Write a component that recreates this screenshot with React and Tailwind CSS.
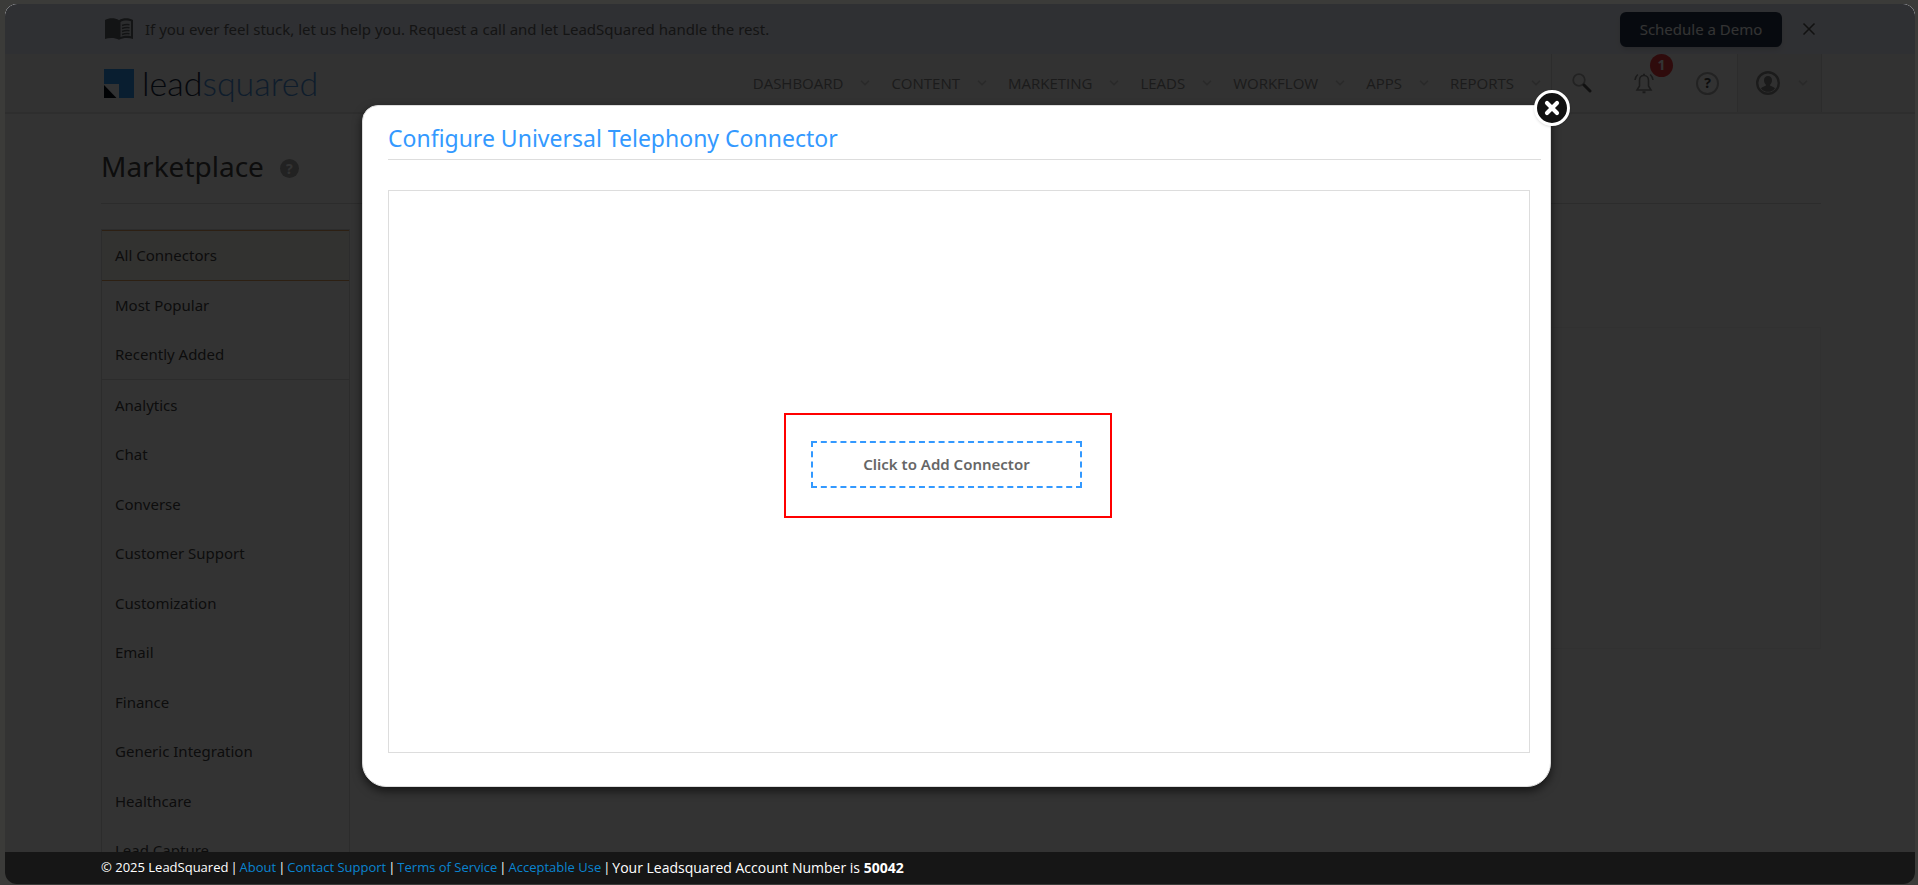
import React, { useState } from "react";
import { ChevronDown, X } from "lucide-react";

const NAV = ["DASHBOARD", "CONTENT", "MARKETING", "LEADS", "WORKFLOW", "APPS", "REPORTS"];

const PINNED = ["All Connectors", "Most Popular", "Recently Added"];

const CATEGORIES = [
  "Analytics",
  "Chat",
  "Converse",
  "Customer Support",
  "Customization",
  "Email",
  "Finance",
  "Generic Integration",
  "Healthcare",
  "Lead Capture",
];

const FOOTER_LINKS = ["About", "Contact Support", "Terms of Service", "Acceptable Use"];

function BookIcon() {
  return (
    <svg width="28" height="22" viewBox="0 0 28 22" aria-hidden>
      <path d="M0 2C4-.3 10-.3 14 2.2 18-.3 24-.3 28 2v19c-4-1.400-10-1.400-14 .8C10 19.600 4 19.600 0 21z" fill="#606368" />
      <path d="M15.500 4C18.500 2.400 22.500 2.200 26 3.200v15c-3.500-.8-7.500-.6-10.500.9z" fill="#d5d9e2" />
      <path d="M17 7.500c2.500-1 5-1.200 7.500-.8M17 10.500c2.500-1 5-1.200 7.500-.8M17 13.500c2.500-1 5-1.200 7.500-.8M17 16.500c2.500-1 5-1.200 7.500-.8" stroke="#606368" strokeWidth="1.600" fill="none" />
    </svg>
  );
}

function LogoMark() {
  return (
    <svg width="30" height="29" viewBox="0 0 30 29" aria-hidden>
      <path d="M0 0h30v29H15V15H0z" fill="#2e96f0" />
      <path d="M0 15h15v14H0z" fill="#f4f8fc" />
      <path d="M0 16l12.500 13H0z" fill="#040b18" />
    </svg>
  );
}

function SearchIcon() {
  return (
    <svg width="20" height="20" viewBox="0 0 20 20" fill="none" aria-hidden>
      <circle cx="7" cy="7" r="5.800" stroke="#aaa" strokeWidth="1.800" />
      <path d="M12 12L18 18" stroke="#555" strokeWidth="3" strokeLinecap="round" />
    </svg>
  );
}

function BellIcon() {
  return (
    <svg width="20" height="21" viewBox="0 0 20 21" fill="none" stroke="#888" strokeWidth="1.600" aria-hidden>
      <path d="M10 2.500c-3 0-4.500 2.300-4.500 5v5.500L3 17h14l-2.500-4V7.500c0-2.700-1.500-5-4.500-5z" />
      <path d="M8.500 19.300h3M10 .8v2" strokeWidth="2" />
      <path d="M3.800 1.500C2.300 2.900 1.200 4.800 1 7M16.200 1.500C17.700 2.900 18.800 4.800 19 7" />
    </svg>
  );
}

function UserIcon() {
  return (
    <svg width="24" height="24" viewBox="0 0 24 24" aria-hidden>
      <circle cx="12" cy="12" r="10.800" fill="none" stroke="#888" strokeWidth="2.400" />
      <path d="M12 5c2.600 0 4 1.900 4 4.300 0 1.900-.8 3.300-1.800 4.200v1.200c2 .7 4 1.500 4.800 2.700a9 9 0 0 1-14 0c.8-1.200 2.800-2 4.800-2.700v-1.200C8.800 12.600 8 11.200 8 9.300 8 6.900 9.400 5 12 5z" fill="#808080" />
    </svg>
  );
}

function Banner({ onClose }) {
  return (
    <div className="h-[50px] bg-[#ebeffc] pl-24 pr-[94px] flex items-center justify-between">
      <div className="flex items-center gap-3 pl-1">
        <BookIcon />
        <span className="text-[15px] text-[#666]">
          If you ever feel stuck, let us help you. Request a call and let LeadSquared handle the rest.
        </span>
      </div>
      <div className="flex items-center gap-[17px] pr-0.5">
        <button className="h-[35px] w-[162px] rounded-md bg-[#24344c] text-[15px] text-white shadow-md">
          Schedule a Demo
        </button>
        <button onClick={onClose} aria-label="Dismiss" className="text-[#555]">
          <X size={20} strokeWidth={2} />
        </button>
      </div>
    </div>
  );
}

function Header() {
  return (
    <header className="h-[60px] bg-[#f9f9f9] border-b-2 border-[#e4e4e4] pl-24 pr-[93px] flex items-stretch">
      <a href="#home" className="flex items-center gap-2 pl-[3px]" aria-label="leadsquared">
        <LogoMark />
        <span className="text-[34px] leading-8 font-light font-[Lato,sans-serif] text-[#182840]">
          lead<span className="text-[#4a90d9]">squared</span>
        </span>
      </a>

      <nav className="ml-auto flex items-center gap-[19px] pr-2 font-['Open_Sans',sans-serif]">
        {NAV.map((n) => (
          <a key={n} href={`#${n.toLowerCase()}`} className="flex items-center gap-[15px] text-[15px] text-[#888]">
            {n}
            <ChevronDown size={14} strokeWidth={3} className="text-[#ccc]" />
          </a>
        ))}
      </nav>

      <div className="flex items-center border-l border-[#ddd] pl-5 pr-[18px] gap-[42px]">
        <button aria-label="Search">
          <SearchIcon />
        </button>
        <button aria-label="Notifications" className="relative">
          <BellIcon />
          <span className="absolute -top-[19px] left-4 size-[23px] rounded-full bg-[#e8373f] text-white text-sm font-bold flex items-center justify-center">
            1
          </span>
        </button>
        <button aria-label="Help" className="size-[23px] rounded-full border-2 border-[#aaa] text-[#444] text-sm leading-none font-bold">
          ?
        </button>
      </div>
      <button aria-label="Account" className="w-[85px] pl-1.5 flex items-center justify-center gap-4 bg-[#efefef] border-x border-[#ddd]">
        <UserIcon />
        <ChevronDown size={14} strokeWidth={3} className="text-[#ccc]" />
      </button>
    </header>
  );
}

function Sidebar() {
  return (
    <ul className="w-[249px] shrink-0 border border-[#ddd] text-[15px] text-[#444]">
      {PINNED.map((p, i) => (
        <li key={p} className={i === 0 ? "border-y border-[#e0a060] bg-[#fbf7f0]" : i === 2 ? "border-b border-[#ddd]" : ""}>
          <a href="#connectors" className="h-[49px] px-[13px] flex items-center">
            {p}
          </a>
        </li>
      ))}
      {CATEGORIES.map((c) => (
        <li key={c} className="px-[13px] odd:h-[49px] even:h-[50px] flex items-center">
          <a href="#connectors">{c}</a>
        </li>
      ))}
    </ul>
  );
}

function ConnectorModal({ onClose }) {
  return (
    <div className="absolute inset-0 bg-black/80 flex justify-center items-start pt-[101px] pr-[7px]">
      <section
        role="dialog"
        aria-label="Configure Universal Telephony Connector"
        className="relative w-[1189px] max-w-full bg-white rounded-t-2xl rounded-b-3xl border border-[#ddd] shadow-[0_4px_10px_rgba(0,0,0,0.6)] pl-[25px] pt-4 pb-[33px]"
      >
        <button
          onClick={onClose}
          aria-label="Close"
          className="absolute -top-4 -right-5 size-9 rounded-full border-[3px] border-white bg-[#111] text-white shadow flex items-center justify-center"
        >
          <X size={20} strokeWidth={5} />
        </button>

        <h2 className="mr-[9px] pb-[5px] border-b border-[#ddd] text-[23px] leading-8 text-[#3399ff]">
          Configure Universal Telephony Connector
        </h2>

        <div className="mt-[30px] mr-5 h-[563px] border border-[#ddd] flex items-center justify-center pr-[22px] pb-3">
          <div className="border-2 border-[#f00] pl-[25px] pr-7 pt-[26px] pb-7">
            <button className="h-[47px] w-[271px] border-2 border-dashed border-[#3399ff] text-[15px] font-semibold text-[#666]">
              Click to Add Connector
            </button>
          </div>
        </div>
      </section>
    </div>
  );
}

function Footer() {
  return (
    <footer className="h-8 shrink-0 bg-[#161616] px-24 flex items-center gap-0.5 text-[13px] text-white font-['Open_Sans',sans-serif]">
      <span>© 2025 LeadSquared</span>
      {FOOTER_LINKS.map((l) => (
        <React.Fragment key={l}>
          <span>|</span>
          <a href="#footer" className="text-[#0a84d0]">
            {l}
          </a>
        </React.Fragment>
      ))}
      <span>|</span>
      <span className="text-sm">
        Your Leadsquared Account Number is <b>50042</b>
      </span>
    </footer>
  );
}

export default function App() {
  const [bannerOpen, setBannerOpen] = useState(true);
  const [modalOpen, setModalOpen] = useState(true);

  return (
    <div className="h-screen bg-[#3b3b39] pt-1 pl-[5px] pr-[3px] pb-px font-['Noto_Sans',sans-serif]">
      <div className="h-full flex flex-col rounded-xl overflow-hidden">
        <div className="relative flex-1 min-h-0 overflow-hidden bg-white">
          {bannerOpen && <Banner onClose={() => setBannerOpen(false)} />}
          <Header />

          <main className="pl-24 pr-[94px]">
            <div className="h-[90px] border-b border-[#ddd] pt-[27px] flex items-start gap-4">
              <h1 className="text-[28px] leading-[50px] text-[#444]">Marketplace</h1>
              <button aria-label="About the marketplace" className="mt-[18px] size-[19px] rounded-full bg-[#aaa] text-white text-sm leading-none font-bold">
                ?
              </button>
            </div>
            <div className="mt-[25px] flex gap-6">
              <Sidebar />
              <div className="mt-[98px] h-[322px] flex-1 border border-[#f6f6f6] bg-[#fcfcfc]" />
            </div>
          </main>

          {modalOpen && <ConnectorModal onClose={() => setModalOpen(false)} />}
        </div>
        <Footer />
      </div>
    </div>
  );
}
